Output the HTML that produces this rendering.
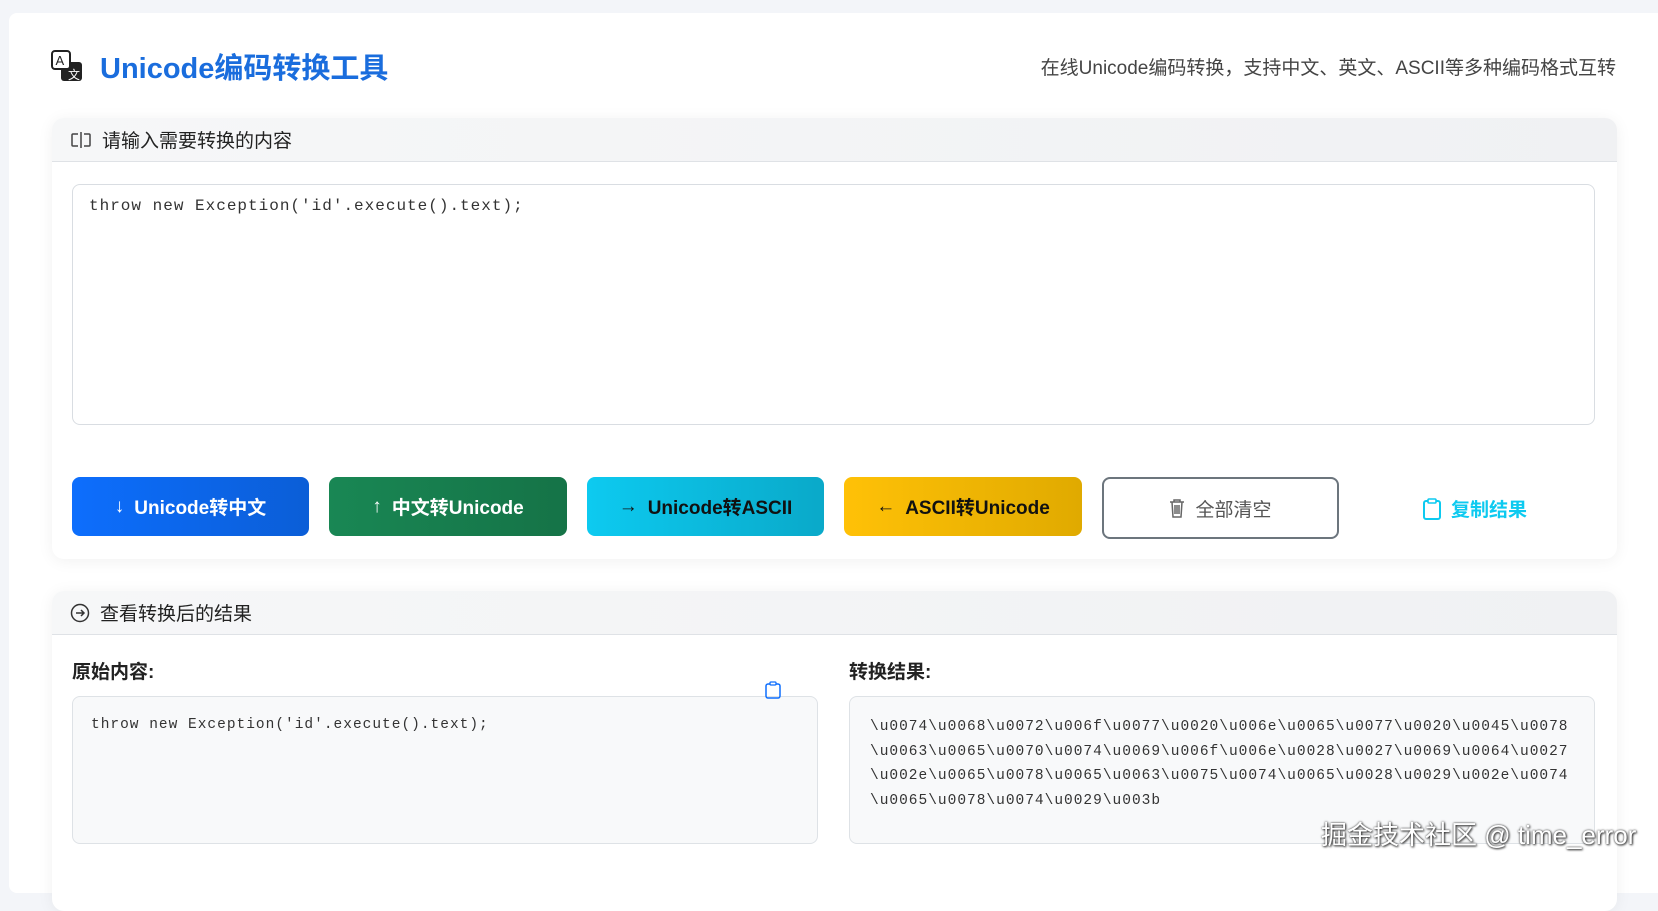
<!DOCTYPE html>
<html><head><meta charset="utf-8"><style>
*{box-sizing:border-box;margin:0;padding:0}
body{width:1658px;height:870px;background:#f3f5f9;font-family:"Liberation Sans","Noto Sans CJK SC",sans-serif;position:relative;overflow:hidden;color:#222}
.abs{position:absolute}
.outer{left:9px;top:13px;width:1660px;height:880px;background:#fff;border-radius:8px}
.card{left:52px;width:1565px;background:#fff;border-radius:12px;box-shadow:0 2px 16px rgba(0,0,0,.06)}
.hdr{position:absolute;left:0;top:0;right:0;background:linear-gradient(90deg,#f6f7f8,#f0f1f3);border-bottom:1px solid #dfe2e6;border-radius:12px 12px 0 0;font-size:19px;color:#222;display:flex;align-items:center;padding-left:18px}
.mono{font-family:"Liberation Mono",monospace;color:#333;letter-spacing:1px}
.btn{top:477px;height:59px;border-radius:8px;color:#fff;font-weight:bold;font-size:19px;display:flex;align-items:center;justify-content:center;gap:10px}
.box{background:#f8f9fa;border:1px solid #dee2e6;border-radius:8px}
</style></head><body>
<div class="abs outer"></div>
<svg class="abs" style="left:51px;top:50px" width="32" height="32" viewBox="0 0 32 32"><rect x="10" y="12" width="21" height="19" rx="3" fill="#222"/><rect x="1" y="1" width="18" height="18" rx="3" fill="#fff" stroke="#222" stroke-width="2"/><text x="4.5" y="15" font-size="13" font-family="Liberation Sans" fill="#222">A</text><text x="17" y="29" font-size="12" font-family="Noto Sans CJK SC" fill="#fff">文</text></svg>
<div class="abs" style="left:100px;top:45px;font-size:29px;font-weight:bold;color:#1a6ddd">Unicode编码转换工具</div>
<div class="abs" style="right:42px;top:53px;font-size:19px;color:#444">在线Unicode编码转换，支持中文、英文、ASCII等多种编码格式互转</div>

<div class="abs card" style="top:118px;height:441px">
<div class="hdr" style="height:44px"><svg width="22" height="16" viewBox="0 0 22 16" style="margin-right:10px"><path d="M8 2H3a1 1 0 0 0-1 1v10a1 1 0 0 0 1 1h5M14 2h5a1 1 0 0 1 1 1v10a1 1 0 0 1-1 1h-5M11 0v16" fill="none" stroke="#444" stroke-width="1.5"/></svg>请输入需要转换的内容</div>
</div>
<div class="abs mono" style="left:72px;top:184px;width:1523px;height:241px;border:1px solid #d9dde2;border-radius:8px;background:#fff;padding:12px 16px;font-size:16px">throw new Exception('id'.execute().text);</div>

<div class="abs btn" style="left:72px;width:237px;background:linear-gradient(90deg,#0d6efd,#0b5ed7)"><span style="font-weight:normal">↓</span> Unicode转中文</div>
<div class="abs btn" style="left:329px;width:238px;background:linear-gradient(90deg,#198754,#157347)"><span style="font-weight:normal">↑</span> 中文转Unicode</div>
<div class="abs btn" style="left:587px;width:237px;background:linear-gradient(90deg,#0dcaf0,#0aa9c9);color:#111"><span style="font-weight:normal">→</span> Unicode转ASCII</div>
<div class="abs btn" style="left:844px;width:238px;background:linear-gradient(90deg,#ffc107,#e0aa00);color:#111"><span style="font-weight:normal">←</span> ASCII转Unicode</div>
<div class="abs btn" style="left:1102px;width:237px;height:62px;background:#fff;border:2px solid #6c757d;color:#555;font-weight:normal"><svg width="16" height="20" viewBox="0 0 16 20"><path d="M1 4h14M5 4V2h6v2M3 4l1 15h8l1-15M6 7v9M8 7v9M10 7v9" fill="none" stroke="#666" stroke-width="1.5"/></svg>全部清空</div>
<div class="abs" style="left:1423px;top:495px;font-size:19px;font-weight:bold;color:#0dcaf0;display:flex;align-items:center;gap:10px"><svg width="18" height="22" viewBox="0 0 18 22"><rect x="1" y="3" width="16" height="18" rx="2" fill="none" stroke="#0dcaf0" stroke-width="2"/><rect x="5" y="1" width="8" height="4" rx="1" fill="#fff" stroke="#0dcaf0" stroke-width="1.6"/></svg>复制结果</div>

<div class="abs card" style="top:591px;height:320px">
<div class="hdr" style="height:44px"><svg width="20" height="20" viewBox="0 0 20 20" style="margin-right:10px"><circle cx="10" cy="10" r="8.5" fill="none" stroke="#333" stroke-width="1.5"/><path d="M6 10h8M11 7l3 3-3 3" fill="none" stroke="#333" stroke-width="1.5"/></svg>查看转换后的结果</div>
</div>
<div class="abs" style="left:72px;top:657px;font-size:19px;font-weight:bold">原始内容:</div>
<div class="abs" style="left:849px;top:657px;font-size:19px;font-weight:bold">转换结果:</div>
<div class="abs box mono" style="left:72px;top:696px;width:746px;height:148px;padding:20px 18px;font-size:14.5px">throw new Exception('id'.execute().text);</div>
<svg class="abs" style="left:765px;top:681px" width="16" height="18" viewBox="0 0 16 18"><rect x="1" y="3" width="14" height="14" rx="2" fill="none" stroke="#0d6efd" stroke-width="1.5"/><rect x="5" y="1" width="6" height="3" rx="1" fill="#fff" stroke="#0d6efd" stroke-width="1.3"/></svg>
<div class="abs box mono" style="left:849px;top:696px;width:746px;height:148px;padding:18px 20px;font-size:14.5px;line-height:24.5px;white-space:nowrap">\u0074\u0068\u0072\u006f\u0077\u0020\u006e\u0065\u0077\u0020\u0045\u0078<br>\u0063\u0065\u0070\u0074\u0069\u006f\u006e\u0028\u0027\u0069\u0064\u0027<br>\u002e\u0065\u0078\u0065\u0063\u0075\u0074\u0065\u0028\u0029\u002e\u0074<br>\u0065\u0078\u0074\u0029\u003b</div>
<div class="abs" style="left:1321px;top:815px;font-size:26px;color:#fff;text-shadow:0 0 2px #333,1px 1px 2px #333">掘金技术社区 @ time_error</div>
</body></html>
